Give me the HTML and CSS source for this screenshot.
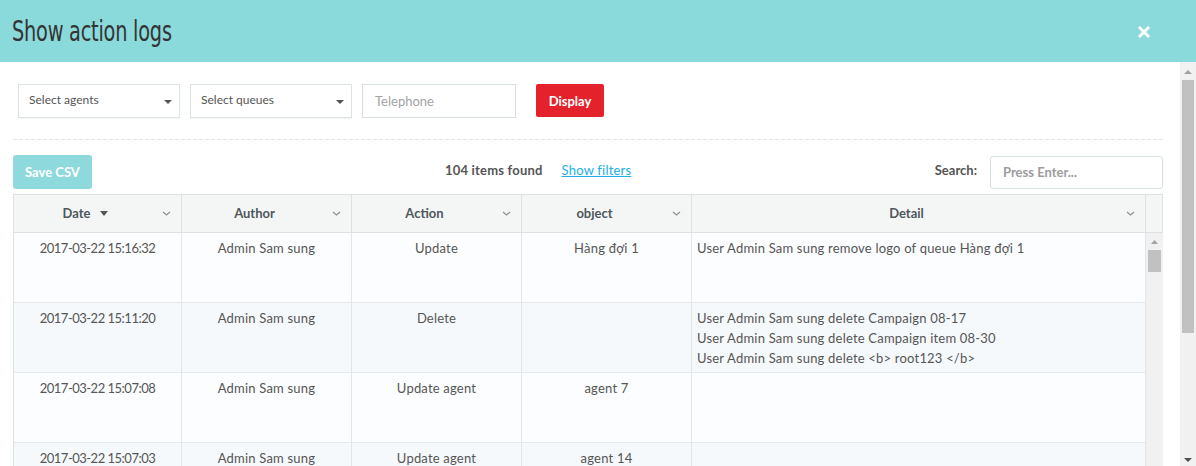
FILE: index.html
```html
<!DOCTYPE html>
<html lang="en">
<head>
<meta charset="utf-8">
<title>Show action logs</title>
<link rel="stylesheet" href="styles.css">
</head>
<body>
<div class="modal">
  <header class="modal-head">
    <h1 class="title">Show action logs</h1>
    <svg class="close" width="12" height="12" viewBox="0 0 12 12"><path d="M2 2 L10 10 M10 2 L2 10" stroke="#fff" stroke-width="3" stroke-linecap="square"/></svg>
  </header>
  <div class="modal-main">
    <div class="content">
      <div class="filters">
        <div class="select"><span>Select agents</span><svg width="8" height="4" viewBox="0 0 8 4"><polygon points="0,0 8,0 4,4" fill="#555"/></svg></div>
        <div class="select"><span>Select queues</span><svg width="8" height="4" viewBox="0 0 8 4"><polygon points="0,0 8,0 4,4" fill="#555"/></svg></div>
        <div class="input tel">Telephone</div>
        <div class="btn btn-display">Display</div>
      </div>
      <div class="sep"></div>
      <div class="toolbar">
        <div class="btn btn-csv">Save CSV</div>
        <div class="count"><b>104 items found</b><a class="link">Show filters</a></div>
        <div class="search"><b>Search:</b><div class="input search-input">Press Enter...</div></div>
      </div>
      <div class="grid">
        <div class="grid-head">
          <div class="th"><span class="th-label">Date <svg class="sort" width="8" height="5" viewBox="0 0 8 5"><polygon points="0,0 8,0 4,5" fill="#555"/></svg></span><svg class="chev" width="9" height="5" viewBox="0 0 9 5"><polyline points="1,1 4.5,4 8,1" fill="none" stroke="#8a9196" stroke-width="1.2"/></svg></div>
          <div class="th"><span class="th-label">Author</span><svg class="chev" width="9" height="5" viewBox="0 0 9 5"><polyline points="1,1 4.5,4 8,1" fill="none" stroke="#8a9196" stroke-width="1.2"/></svg></div>
          <div class="th"><span class="th-label">Action</span><svg class="chev" width="9" height="5" viewBox="0 0 9 5"><polyline points="1,1 4.5,4 8,1" fill="none" stroke="#8a9196" stroke-width="1.2"/></svg></div>
          <div class="th"><span class="th-label">object</span><svg class="chev" width="9" height="5" viewBox="0 0 9 5"><polyline points="1,1 4.5,4 8,1" fill="none" stroke="#8a9196" stroke-width="1.2"/></svg></div>
          <div class="th"><span class="th-label">Detail</span><svg class="chev" width="9" height="5" viewBox="0 0 9 5"><polyline points="1,1 4.5,4 8,1" fill="none" stroke="#8a9196" stroke-width="1.2"/></svg></div>
          <div class="th th-blank"></div>
        </div>
        <div class="grid-body">
          <div class="rows">
            <div class="row">
              <div class="td date">2017-03-22 15:16:32</div>
              <div class="td">Admin Sam sung</div>
              <div class="td">Update</div>
              <div class="td">Hàng đợi 1</div>
              <div class="td detail">User Admin Sam sung remove logo of queue Hàng đợi 1</div>
            </div>
            <div class="row alt">
              <div class="td date">2017-03-22 15:11:20</div>
              <div class="td">Admin Sam sung</div>
              <div class="td">Delete</div>
              <div class="td"></div>
              <div class="td detail">User Admin Sam sung delete Campaign 08-17<br>User Admin Sam sung delete Campaign item 08-30<br>User Admin Sam sung delete &lt;b&gt; root123 &lt;/b&gt;</div>
            </div>
            <div class="row">
              <div class="td date">2017-03-22 15:07:08</div>
              <div class="td">Admin Sam sung</div>
              <div class="td">Update agent</div>
              <div class="td">agent 7</div>
              <div class="td detail"></div>
            </div>
            <div class="row alt">
              <div class="td date">2017-03-22 15:07:03</div>
              <div class="td">Admin Sam sung</div>
              <div class="td">Update agent</div>
              <div class="td">agent 14</div>
              <div class="td detail"></div>
            </div>
          </div>
          <div class="vscroll">
            <svg class="arrow-up" width="7" height="4" viewBox="0 0 7 4"><polygon points="0,4 7,4 3.5,0" fill="#a3a3a3"/></svg>
            <div class="vthumb"></div>
          </div>
        </div>
      </div>
    </div>
    <div class="page-scroll">
      <svg class="p-up" width="8" height="4" viewBox="0 0 8 4"><polygon points="0,4 8,4 4,0" fill="#a3a3a3"/></svg>
      <div class="p-thumb"></div>
      <div class="p-fill"></div>
      <svg class="p-down" width="8" height="4" viewBox="0 0 8 4"><polygon points="0,0 8,0 4,4" fill="#505050"/></svg>
    </div>
  </div>
</div>
</body>
</html>
```
FILE: styles.css
```css
* { box-sizing: border-box; }
html, body { margin: 0; height: 100%; overflow: hidden; }
body {
  font-family: Lato, "Open Sans", sans-serif;
  font-size: 13px;
  color: #555;
  background: #fff;
}
.modal { width: 1196px; height: 466px; display: flex; flex-direction: column; }
.modal-head {
  height: 62px;
  flex: none;
  background: #8ad9db;
  display: flex;
  align-items: center;
  justify-content: space-between;
  padding: 0 46px 0 12px;
}
.title {
  margin: 0;
  font-family: "DejaVu Sans Condensed", "DejaVu Sans", sans-serif;
  font-stretch: condensed;
  font-weight: normal;
  font-size: 29px;
  letter-spacing: -0.3px;
  color: #333;
  transform: scaleX(0.74);
  transform-origin: left center;
  white-space: nowrap;
}
.close { display: block; margin-top: 1px; }

.modal-main { flex: 1; display: flex; min-height: 0; }
.content { flex: 1; padding: 22px 17px 0 13px; overflow: hidden; }

.filters { display: flex; gap: 10px; padding-left: 5px; height: 34px; }
.select {
  width: 162px;
  height: 34px;
  border: 1px solid #dbe2e4;
  box-shadow: 0 1px 1px rgba(0,0,0,0.04);
  padding: 0 7px 3px 10px;
  display: flex;
  align-items: center;
  justify-content: space-between;
  font-size: 12px;
  color: #555;
}
.select svg { margin-top: 5px; }
.input {
  height: 34px;
  border: 1px solid #d6e0e2;
  display: flex;
  align-items: center;
  padding: 0 12px;
  color: #a3a3a3;
}
.tel { width: 154px; font-size: 13px; }
.btn {
  display: flex;
  align-items: center;
  justify-content: center;
  color: #fff;
  font-weight: bold;
  font-size: 13px;
}
.btn-display {
  width: 68px;
  height: 33px;
  margin-left: 10px;
  background: #e4222b;
  border-radius: 2px;
}
.sep {
  height: 1px;
  margin-top: 21px;
  background: repeating-linear-gradient(to right, #e2e5e6 0 4px, transparent 4px 6px);
}
.toolbar { display: flex; align-items: center; margin-top: 15px; height: 34px; }
.btn-csv { width: 79px; height: 34px; background: #8ed9dc; border-radius: 3px; }
.count { margin-left: 353px; display: flex; align-items: center; color: #555; padding-bottom: 4px; }
.count b { letter-spacing: 0.2px; }
.link { margin-left: 19px; color: #22aee6; text-decoration: underline; letter-spacing: 0.2px; }
.search { margin-left: auto; display: flex; align-items: center; }
.search b { color: #555; padding-bottom: 4px; }
.search-input {
  margin-left: 13px;
  width: 173px;
  height: 33px;
  border-radius: 3px;
  font-weight: bold;
  color: #9c9c9c;
}

.grid { margin-top: 5px; border-left: 1px solid #dce1e2; border-top: 1px solid #dce1e2; }
.grid-head {
  display: grid;
  grid-template-columns: 168px 170px 170px 170px 454px 17px;
  height: 38px;
  background: #f4f6f6;
}
.th {
  display: flex;
  align-items: center;
  border-right: 1px solid #dce1e2;
  border-bottom: 1px solid #dce1e2;
  font-weight: bold;
  color: #4e575c;
  padding-bottom: 1px;
}
.th-label { flex: 1; text-align: center; display: flex; align-items: center; justify-content: center; }
.sort { margin-left: 10px; }
.chev { flex: none; margin: 1px 10px 0 5px; }
.th-blank { background: #f4f6f6; }

.grid-body { display: flex; height: 240px; overflow: hidden; }
.rows { width: 1132px; }
.row {
  display: grid;
  grid-template-columns: 168px 170px 170px 170px 454px;
  height: 70px;
  background: #fcfdfe;
}
.row.alt { background: #f6f9fb; }
.td {
  border-right: 1px solid #e1e6e8;
  border-bottom: 1px solid #e4e9eb;
  padding-top: 5px;
  line-height: 20px;
  text-align: center;
  color: #555;
  letter-spacing: 0.2px;
}
.td.date { letter-spacing: -0.5px; }
.td.detail { text-align: left; padding-left: 5px; }
.vscroll {
  width: 17px;
  background: #f1f1f1;
  display: flex;
  flex-direction: column;
  align-items: center;
}
.arrow-up { margin-top: 7px; }
.vthumb { width: 13px; height: 22px; margin-top: 6px; background: #c1c1c1; }

.page-scroll {
  width: 16px;
  flex: none;
  background: #f1f1f1;
  display: flex;
  flex-direction: column;
  align-items: center;
}
.p-up { margin-top: 8px; }
.p-thumb { width: 12px; height: 253px; margin-top: 6px; background: #c1c1c1; }
.p-fill { flex: 1; }
.p-down { margin-bottom: 4px; }
```
